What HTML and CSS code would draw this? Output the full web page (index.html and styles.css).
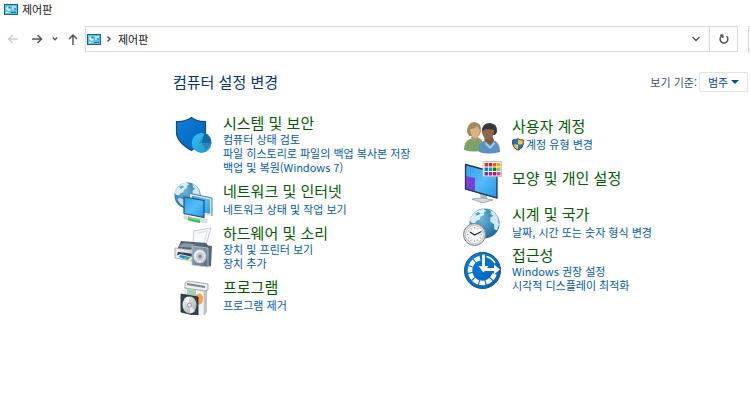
FILE: index.html
```html
<!DOCTYPE html>
<html lang="ko">
<head>
<meta charset="utf-8">
<title>제어판</title>
<link rel="stylesheet" href="styles.css">
</head>
<body>
<svg class="defs" aria-hidden="true">
  <defs>
    <linearGradient id="blue" x1="0" y1="0" x2="1" y2="1"><stop offset="0" stop-color="#0a80dc"/><stop offset="1" stop-color="#0560b8"/></linearGradient>
    <linearGradient id="cyan" x1="0" y1="0" x2="1" y2="1"><stop offset="0" stop-color="#35c4ee"/><stop offset="1" stop-color="#1595d2"/></linearGradient>
    <linearGradient id="screen" x1="0" y1="0" x2="1" y2="1"><stop offset="0" stop-color="#2e9cee"/><stop offset=".5" stop-color="#55bdf8"/><stop offset="1" stop-color="#2495ea"/></linearGradient>
    <radialGradient id="globe" cx=".4" cy=".35" r=".7"><stop offset="0" stop-color="#6fb4d8"/><stop offset=".6" stop-color="#3788b5"/><stop offset="1" stop-color="#1f6490"/></radialGradient>
    <linearGradient id="silver" x1="0" y1="0" x2="1" y2="1"><stop offset="0" stop-color="#f4f5f6"/><stop offset="1" stop-color="#a5abb1"/></linearGradient>
    <linearGradient id="steel" x1="0" y1="0" x2="1" y2="1"><stop offset="0" stop-color="#98a8b6"/><stop offset="1" stop-color="#5d7183"/></linearGradient>
    <symbol id="panel" viewBox="0 0 14 11">
      <rect x=".5" y=".5" width="13" height="10" fill="#58c4f0" stroke="#17628f"/>
      <circle cx="4.500" cy="4.500" r="2.300" fill="#e6f7ff"/><path d="M4.500 4.500V2.200A2.300 2.300 0 0 1 6.800 4.500z" fill="#1769aa"/>
      <path d="M8 3h4M8 5h2M2 8.500h4" stroke="#fff"/><path d="M10.500 5h1.500M7 8.500h5" stroke="#176fac"/><path d="M4 8h2v1H4z" fill="#f1c64e"/>
    </symbol>
    <symbol id="earth" viewBox="0 0 32 32">
      <circle cx="16" cy="16" r="15.500" fill="url(#globe)"/>
      <path d="M3 8Q8 1 15 1l3 2-3 2 1 2-4 2-1 3-3 1-2 3-4-1-1-3z" fill="#d9edf5"/>
      <path d="M21 2q7 2 9 9l1 6-2 6-3-1 0-5-4-3 0-4 3-2-3-2 1-2z" fill="#cfe7f1"/>
      <path d="M6 19l5 1 3 4-2 5q-6-3-8-9z" fill="#b9d9e8"/>
      <path d="M6 6l4-2 2 2-4 2zM17 7l2 1-1 2z" fill="#5ea5c9"/>
    </symbol>
  </defs>
</svg>

<header class="titlebar">
  <svg class="panel-icon" aria-hidden="true"><use href="#panel"/></svg>
  <span>제어판</span>
</header>

<nav class="toolbar" aria-label="탐색">
  <div class="history">
    <button class="tool" disabled aria-label="뒤로"><svg width="12" height="12" viewBox="0 0 12 12"><path d="M11 6H1.500M5.500 2l-4 4 4 4"/></svg></button>
    <button class="tool" aria-label="앞으로"><svg width="12" height="12" viewBox="0 0 12 12"><path d="M1 6h9.500M6.500 2l4 4-4 4"/></svg></button>
    <button class="tool tool-small" aria-label="최근 위치"><svg width="6" height="12" viewBox="0 0 6 12"><path d="M.8 4.500L3 6.700l2.200-2.200"/></svg></button>
    <button class="tool" aria-label="위로"><svg width="12" height="12" viewBox="0 0 12 12"><path d="M6 12V2M2 6l4-4 4 4"/></svg></button>
  </div>
  <div class="address">
    <svg class="panel-icon" aria-hidden="true"><use href="#panel"/></svg>
    <svg class="crumb-arrow" viewBox="0 0 6 10" aria-hidden="true"><path d="M1.500 2.500L4 5 1.500 7.500"/></svg>
    <span class="crumb">제어판</span>
    <button class="tool address-open" aria-label="이전 위치"><svg width="10" height="12" viewBox="0 0 10 12"><path d="M1.500 4L5 7.500 8.500 4"/></svg></button>
    <button class="tool refresh" aria-label="새로 고침"><svg width="12" height="12" viewBox="0 0 12 12"><path d="M8.600 3.200A3.900 3.900 0 1 1 3.600 3M2 2.200h2.800V5"/></svg></button>
  </div>
  <input class="search" type="text" aria-label="제어판 검색">
</nav>

<main>
  <div class="heading-row">
    <h1>컴퓨터 설정 변경</h1>
    <div class="view">
      <label for="view">보기 기준:</label>
      <span class="picker"><select id="view"><option>범주</option></select></span>
    </div>
  </div>

  <div class="columns">
    <div class="column column-left">
      <section class="category top">
        <svg class="icon" viewBox="0 0 40 40" aria-hidden="true">
          <path d="M3.500 7.500Q12 8 18.500 3.500q6 4.500 14 4v11Q32 27 18.500 36.500 3.500 28 3.500 18z" fill="url(#blue)" stroke="#104b80" stroke-width="1.200"/>
          <ellipse cx="28.500" cy="29" rx="9.800" ry="10" fill="url(#cyan)"/>
          <path d="M28.500 29l3-10.500q7 3 7 11z" fill="#1469a8"/><path d="M28 29l2.500-8L26 30zM28.500 29l9.500 1-5 6z" fill="#3680b5"/>
        </svg>
        <div class="text">
          <h2><a href="#">시스템 및 보안</a></h2>
          <ul><li><a href="#">컴퓨터 상태 검토</a></li><li><a href="#">파일 히스토리로 파일의 백업 복사본 저장</a></li><li><a href="#">백업 및 복원(Windows 7)</a></li></ul>
        </div>
      </section>
      <section class="category single">
        <svg class="icon" viewBox="0 0 40 40" aria-hidden="true">
          <use href="#earth" x="1" y="3" width="27" height="27"/>
          <path d="M18 15.500l20 4V36l-20-4z" fill="url(#screen)" stroke="#e1edf3" stroke-width="1.800"/><path d="M17.500 14.500l21.500 4.500v18" fill="none" stroke="#476575" stroke-width=".9"/>
          <path d="M11 18l20 3.500V38.500l-20-4z" fill="url(#screen)" stroke="#284f68" stroke-width="1.200"/>
          <path d="M11 36.500q11 3.500 23 4v3q-12 0-23-4z" fill="#dfe5e3" stroke="#b5bfbc" stroke-width=".5"/><path d="M15 37.500q5 2 12 2.500v4q-7-1-12-3z" fill="#43b759"/><path d="M15 38.500q5 2 12 2.500" fill="none" stroke="#8ce39a"/>
        </svg>
        <div class="text">
          <h2><a href="#">네트워크 및 인터넷</a></h2>
          <ul><li><a href="#">네트워크 상태 및 작업 보기</a></li></ul>
        </div>
      </section>
      <section class="category">
        <svg class="icon" viewBox="0 0 40 40" aria-hidden="true">
          <path d="M21 4l17-3-5 17-13-2z" fill="#f8f9fa" stroke="#b6bec4" stroke-width=".8"/><path d="M25 6l9-2-3 12" fill="none" stroke="#d7dde2"/>
          <path d="M8 14l25 2 5 6-6 5-28-4z" fill="#51606e"/><path d="M10 16l21 2-4 3-22-1z" fill="#8a98a5"/>
          <path d="M2 21l28 3v12L2 31z" fill="url(#silver)" stroke="#8a949c" stroke-width=".7"/><path d="M5 25l17 2v4L4 28z" fill="#33414e"/><path d="M7 27l13 3-3 4-15-4z" fill="#e8f4f8"/><path d="M7 28l6 1-2 3-5-2z" fill="#168bd8"/><path d="M13 29l5 1-3 3-4-1z" fill="#55ac77"/>
          <path d="M19 19l4-2 16 2-1 20-4 1z" fill="#536779"/>
          <path d="M19 19l16 2v19l-16-2z" fill="url(#steel)" stroke="#b9c5ce" stroke-width=".8"/>
          <ellipse cx="27" cy="29.500" rx="6.500" ry="7" fill="url(#silver)"/><ellipse cx="27" cy="29.500" rx="4.600" ry="5.200" fill="#c5cbd0" stroke="#f8fafb"/><circle cx="27" cy="29.500" r="1.700" fill="#7d8991"/>
        </svg>
        <div class="text">
          <h2><a href="#">하드웨어 및 소리</a></h2>
          <ul><li><a href="#">장치 및 프린터 보기</a></li><li><a href="#">장치 추가</a></li></ul>
        </div>
      </section>
      <section class="category single">
        <svg class="icon" viewBox="0 0 40 40" aria-hidden="true">
          <path d="M12 12l19 3v26l-19-5z" fill="#f1f2f3" stroke="#c5c8ca" stroke-width=".7"/>
          <path d="M31 15l3-3v25l-3 4z" fill="#bfc3c6"/>
          <path d="M12 8l3-2 20 3v6l-3 1-20-3z" fill="#eceeef" stroke="#959a9f" stroke-width=".8"/><path d="M14 8l18 3v2l-18-3z" fill="#7b858c"/>
          <path d="M14 14l9 1v13l-9-2z" fill="#a8cfb5"/><ellipse cx="26" cy="24" rx="4.200" ry="5.500" fill="#f5a34d"/>
          <path d="M8 19l17 3v19L8 37z" fill="#344750" stroke="#18252c" stroke-width=".8"/>
          <ellipse cx="16.500" cy="30" rx="7" ry="8.500" fill="url(#silver)"/><path d="M16 30l-5-6q3-3 5-2zM17 30l5 6q-3 3-5 2z" fill="#fff" opacity=".65"/><circle cx="16.500" cy="30" r="2" fill="#eef1f2" stroke="#8b999f"/>
        </svg>
        <div class="text">
          <h2><a href="#">프로그램</a></h2>
          <ul><li><a href="#">프로그램 제거</a></li></ul>
        </div>
      </section>
    </div>

    <div class="column column-right">
      <section class="category single">
        <svg class="icon" viewBox="0 0 40 40" aria-hidden="true">
          <path d="M2 36q0-9 6-11l9-1q5 2 5 12-10 3-20 0z" fill="#7ca366"/><path d="M9 24l3.500 4 4-4-1-3H10z" fill="#bd9265"/>
          <path d="M5 18Q5 9 12 8q8 1 7 9l-2 5H7z" fill="#a5895b"/><path d="M8 15q5 0 7-3l3 4q-1 8-5 8t-5-9z" fill="#d7b285"/>
          <path d="M17 38q-1-9 5-11l9-1q7 2 7 12-11 3-21 0z" fill="#5b91c4"/><path d="M22 26l6 6 4-6-2-4h-6z" fill="#805a3d"/>
          <path d="M20 17q0-8 8-8 8 1 7 9l-2 3-11 0z" fill="#36393b"/><path d="M20 18q2-3 5-3l7 1q0 9-6 10-5-1-6-8z" fill="#916647"/><path d="M24 28l4 4 4-4 1 2-5 5-5-5z" fill="#a4c9e9"/>
        </svg>
        <div class="text">
          <h2><a href="#">사용자 계정</a></h2>
          <ul><li class="with-shield">
            <svg class="shield" viewBox="0 0 12 13" aria-hidden="true"><path d="M.7 2Q4 2 6 .7 8 2 11.300 2v4Q11 10 6 12.300 1 10 .7 6z" fill="#fbc62e"/><path d="M6 .7V6.500H.8L.7 2Q4 2 6 .7zM6 6.500h5.200Q11 10 6 12.300z" fill="#1878d1"/><path d="M.7 2Q4 2 6 .7 8 2 11.300 2v4Q11 10 6 12.300 1 10 .7 6z" fill="none" stroke="#384452"/></svg>
            <a href="#">계정 유형 변경</a></li></ul>
        </div>
      </section>
      <section class="category">
        <svg class="icon" viewBox="0 0 40 40" aria-hidden="true">
          <path d="M17 33l8 2v6h-6z" fill="#aeb8c0"/><path d="M10 41l12-1 9 2-11 3z" fill="#d5dade" stroke="#87919a" stroke-width=".7"/>
          <path d="M3.500 6.500L35 15v25L3.500 31z" fill="url(#screen)" stroke="#2c3338" stroke-width="1.300"/>
          <path d="M4 18l9 2v13l-9-2.500z" fill="#7640db"/><path d="M4 31l31 9" stroke="#173b66"/>
          <path d="M21 3.500h18.500v15H21z" fill="#fff" stroke="#aeb4b8" stroke-width=".8"/>
          <path d="M22.500 5h3.500v3.500h-3.500z" fill="#d83236"/><path d="M26.700 5h3.500v3.500h-3.500z" fill="#e61532"/><path d="M30.900 5h3.500v3.500h-3.500z" fill="#ed5a22"/><path d="M35 5h3.500v3.500H35z" fill="#f2ab00"/>
          <path d="M22.500 9.500h3.500v3.500h-3.500z" fill="#137ce0"/><path d="M26.700 9.500h3.500v3.500h-3.500z" fill="#00a4bd"/><path d="M30.900 9.500h3.500v3.500h-3.500z" fill="#168018"/><path d="M35 9.500h3.500v3.500H35z" fill="#92c83f"/>
          <path d="M22.500 14h3.500v3.500h-3.500z" fill="#6439b8"/><path d="M26.700 14h3.500v3.500h-3.500z" fill="#9f249f"/><path d="M30.900 14h3.500v3.500h-3.500z" fill="#c20b75"/><path d="M35 14h3.500v3.500H35z" fill="#e43da2"/>
        </svg>
        <div class="text"><h2><a href="#">모양 및 개인 설정</a></h2></div>
      </section>
      <section class="category single">
        <svg class="icon" viewBox="0 0 40 40" aria-hidden="true">
          <use href="#earth" x="7" y="6" width="31" height="31"/>
          <circle cx="12.500" cy="32.500" r="11" fill="#d8dadd" stroke="#7e858b"/><circle cx="12.500" cy="32.500" r="9" fill="#f5f6f7" stroke="#b9bec2" stroke-width=".7"/>
          <path d="M12.500 25v1.500M12.500 38.500V40M5 32.500h1.500M18.500 32.500H20M8.700 26l.7 1.300M16.300 26l-.7 1.300M6 28.700l1.300.7M6 36.300l1.300-.7M8.700 39l.7-1.300M16.300 39l-.7-1.300M19 36.300l-1.300-.7" stroke="#84898e" stroke-width=".8"/>
          <path d="M8 30l4.500 3 7-3.500" fill="none" stroke="#252a2e" stroke-width="1.300"/>
        </svg>
        <div class="text">
          <h2><a href="#">시계 및 국가</a></h2>
          <ul><li><a href="#">날짜, 시간 또는 숫자 형식 변경</a></li></ul>
        </div>
      </section>
      <section class="category">
        <svg class="icon" viewBox="0 0 40 40" aria-hidden="true">
          <circle cx="20.500" cy="21.500" r="18" fill="url(#blue)" stroke="#184e80"/>
          <path d="M24.500 7.500A14.500 14.500 0 0 1 33 14" fill="none" stroke="#fff" stroke-width="1.600"/>
          <path d="M18 9.200A12.500 12.500 0 1 0 32.500 25" fill="none" stroke="#fff" stroke-width="4.500" stroke-dasharray="5.600 1.100"/>
          <path d="M21.500 5.500v15M23 20.500h10" stroke="#fff" stroke-width="2.800"/><path d="M16.500 17l5 6.500 5-6.500zM32 15.500l6 5-6 5z" fill="#fff"/>
        </svg>
        <div class="text">
          <h2><a href="#">접근성</a></h2>
          <ul><li><a href="#">Windows 권장 설정</a></li><li><a href="#">시각적 디스플레이 최적화</a></li></ul>
        </div>
      </section>
    </div>
  </div>
</main>
</body>
</html>
```
FILE: styles.css
```css
* { box-sizing: border-box; }
body {
  margin: 0;
  background: #fff;
  color: #111;
  font: 11px/14px "Noto Sans CJK KR", sans-serif;
}
button, select, input { font: inherit; }
a { color: inherit; text-decoration: none; }
a:hover { text-decoration: underline; }
h1, h2, ul { margin: 0; padding: 0; font-weight: 400; }
ul { list-style: none; }
.defs { position: absolute; width: 0; height: 0; }

.titlebar {
  display: flex;
  align-items: center;
  gap: 4px;
  height: 18px;
  padding-left: 4px;
}
.panel-icon { flex: none; width: 14px; height: 11px; }

.toolbar {
  display: flex;
  align-items: stretch;
  height: 26px;
  margin-top: 8px;
}
.history {
  display: flex;
  align-items: center;
  gap: 12px;
  width: 85px;
  padding-left: 7px;
}
.tool {
  display: flex;
  align-items: center;
  justify-content: center;
  flex: none;
  padding: 0;
  border: 0;
  background: none;
}
.tool svg, .crumb-arrow {
  fill: none;
  stroke: #555;
  stroke-width: 1.5;
}
.tool:disabled svg { stroke: #ccc; }
.tool-small { margin: 0 -3px; }
.address {
  display: flex;
  align-items: center;
  flex: 1;
  min-width: 0;
  padding-left: 1px;
  border: 1px solid #d9d9d9;
}
.crumb-arrow { width: 6px; height: 10px; margin-left: 5px; }
.crumb { margin-left: 6px; }
.address-open { width: 26px; margin-left: auto; }
.refresh { align-self: stretch; width: 28px; border-left: 1px solid #d9d9d9; }
.search {
  width: 2px;
  margin-left: 10px;
  padding: 0;
  border: 1px solid #d9d9d9;
  border-right: 0;
}

main { padding: 20px 2px 0 173px; }
.heading-row {
  display: flex;
  align-items: center;
  justify-content: space-between;
}
h1 { color: #003087; font-size: 15px; line-height: 18px; }
.view { display: flex; align-items: center; gap: 2px; color: #3d5068; }
.picker { position: relative; }
.picker::after {
  content: "";
  position: absolute;
  top: 8px;
  right: 9px;
  border: 4px solid transparent;
  border-top-color: #0050a8;
  border-bottom: 0;
  pointer-events: none;
}
select {
  display: block;
  width: 49px;
  height: 20px;
  padding: 0 0 0 8px;
  border: 1px solid #dde5f0;
  border-radius: 2px;
  background: #fff;
  color: #003eab;
  appearance: none;
}

.columns {
  display: grid;
  grid-template-columns: 289px 1fr;
  align-items: start;
  margin-top: 22px;
}
.column { display: flex; flex-direction: column; }
.column-left { gap: 5px; }
.column-right { gap: 4px; }
.category { display: flex; align-items: center; gap: 10px; }
.top { align-items: flex-start; }
.icon { flex: none; width: 40px; height: 40px; overflow: visible; }
.text { min-width: 0; white-space: nowrap; }
h2 { color: #005c00; font-size: 15px; line-height: 18px; }
ul { color: #0059b8; }
.single ul { margin-top: 2px; }
.with-shield { display: flex; align-items: center; gap: 2px; }
.shield { width: 12px; height: 13px; }
```
